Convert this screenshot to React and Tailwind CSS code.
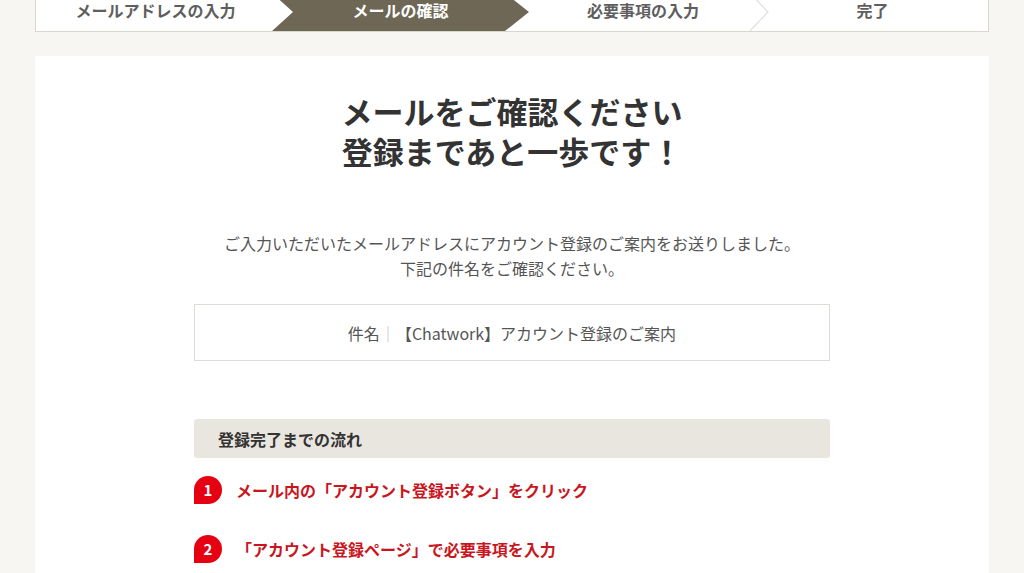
import React from 'react';

const steps = [
  { label: 'メールアドレスの入力', w: 'w-[239px]' },
  { label: 'メールの確認', w: 'w-[257px]', active: true },
  { label: '必要事項の入力', w: 'w-[228px]' },
  { label: '完了', w: 'flex-1', chevron: true },
];

function StepBar() {
  return (
    <div className="mx-auto -mt-[7px] flex h-[39px] w-[954px] border-x border-b border-[#d9d6cf] bg-white">
      {steps.map((s) =>
        s.active ? (
          <div
            key={s.label}
            className={`${s.w} -ml-[3px] flex shrink-0 items-center justify-center bg-[#6f6755] pb-[4px] text-[16px] font-bold leading-[16px] text-white`}
            style={{ clipPath: 'polygon(0 0, 233px 0, 100% 50%, 233px 100%, 0 100%, 21px 50%)' }}
          >
            {s.label}
          </div>
        ) : (
          <div
            key={s.label}
            className={`${s.w} relative flex shrink-0 items-center justify-center pb-[4px] text-[16px] font-bold leading-[16px] text-[#5e5e5e]`}
          >
            {s.chevron && (
              <svg className="absolute -left-[8px] top-0 h-full w-[22px]" viewBox="0 0 22 38" fill="none">
                <polyline points="1,0 19,19 1,38" stroke="#e2e0da" strokeWidth="1.2" />
              </svg>
            )}
            {s.label}
          </div>
        )
      )}
    </div>
  );
}

function FlowItem({ n, children }) {
  return (
    <div className="flex h-[28px] items-center gap-[14px]">
      <span className="flex h-[28px] w-[28px] items-center justify-center rounded-full rounded-bl-none bg-[#e50012] text-[15px] font-bold text-white">
        {n}
      </span>
      <span className="text-[16px] font-bold text-[#c9161e]">{children}</span>
    </div>
  );
}

export default function App() {
  return (
    <div
      className="h-[573px] overflow-hidden bg-[#f7f6f3]"
      style={{ fontFamily: '"Noto Sans CJK JP", "Noto Sans", sans-serif' }}
    >
      <StepBar />

      <main className="mx-auto mt-[24px] h-[600px] w-[954px] bg-white pt-[35px]">
        <h1 className="flex flex-col items-center text-[31px] font-bold leading-[40px] text-[#333]">
          <span className="block h-[40px]">メールをご確認ください</span>
          <span className="block h-[40px]">登録まであと一歩です！</span>
        </h1>

        <p className="mt-[60px] text-center text-[16px] leading-[25px] text-[#555]">
          ご入力いただいたメールアドレスにアカウント登録のご案内をお送りしました。
          <br />
          下記の件名をご確認ください。
        </p>

        <div className="mx-auto mt-[23px] flex h-[57px] w-[636px] items-center justify-center border border-[#dedcd7] text-[16px] text-[#555]">
          件名<span className="text-[#bbb]">｜</span>【Chatwork】アカウント登録のご案内
        </div>

        <div className="mx-auto mt-[58px] w-[636px]">
          <div className="flex h-[39px] items-center rounded-[3px] bg-[#e9e6e0] px-[24px] text-[16px] font-bold text-[#333]">
            登録完了までの流れ
          </div>
          <div className="mt-[18px] flex flex-col gap-[31px]">
            <FlowItem n="1">メール内の「アカウント登録ボタン」をクリック</FlowItem>
            <FlowItem n="2">「アカウント登録ページ」で必要事項を入力</FlowItem>
          </div>
        </div>
      </main>
    </div>
  );
}
